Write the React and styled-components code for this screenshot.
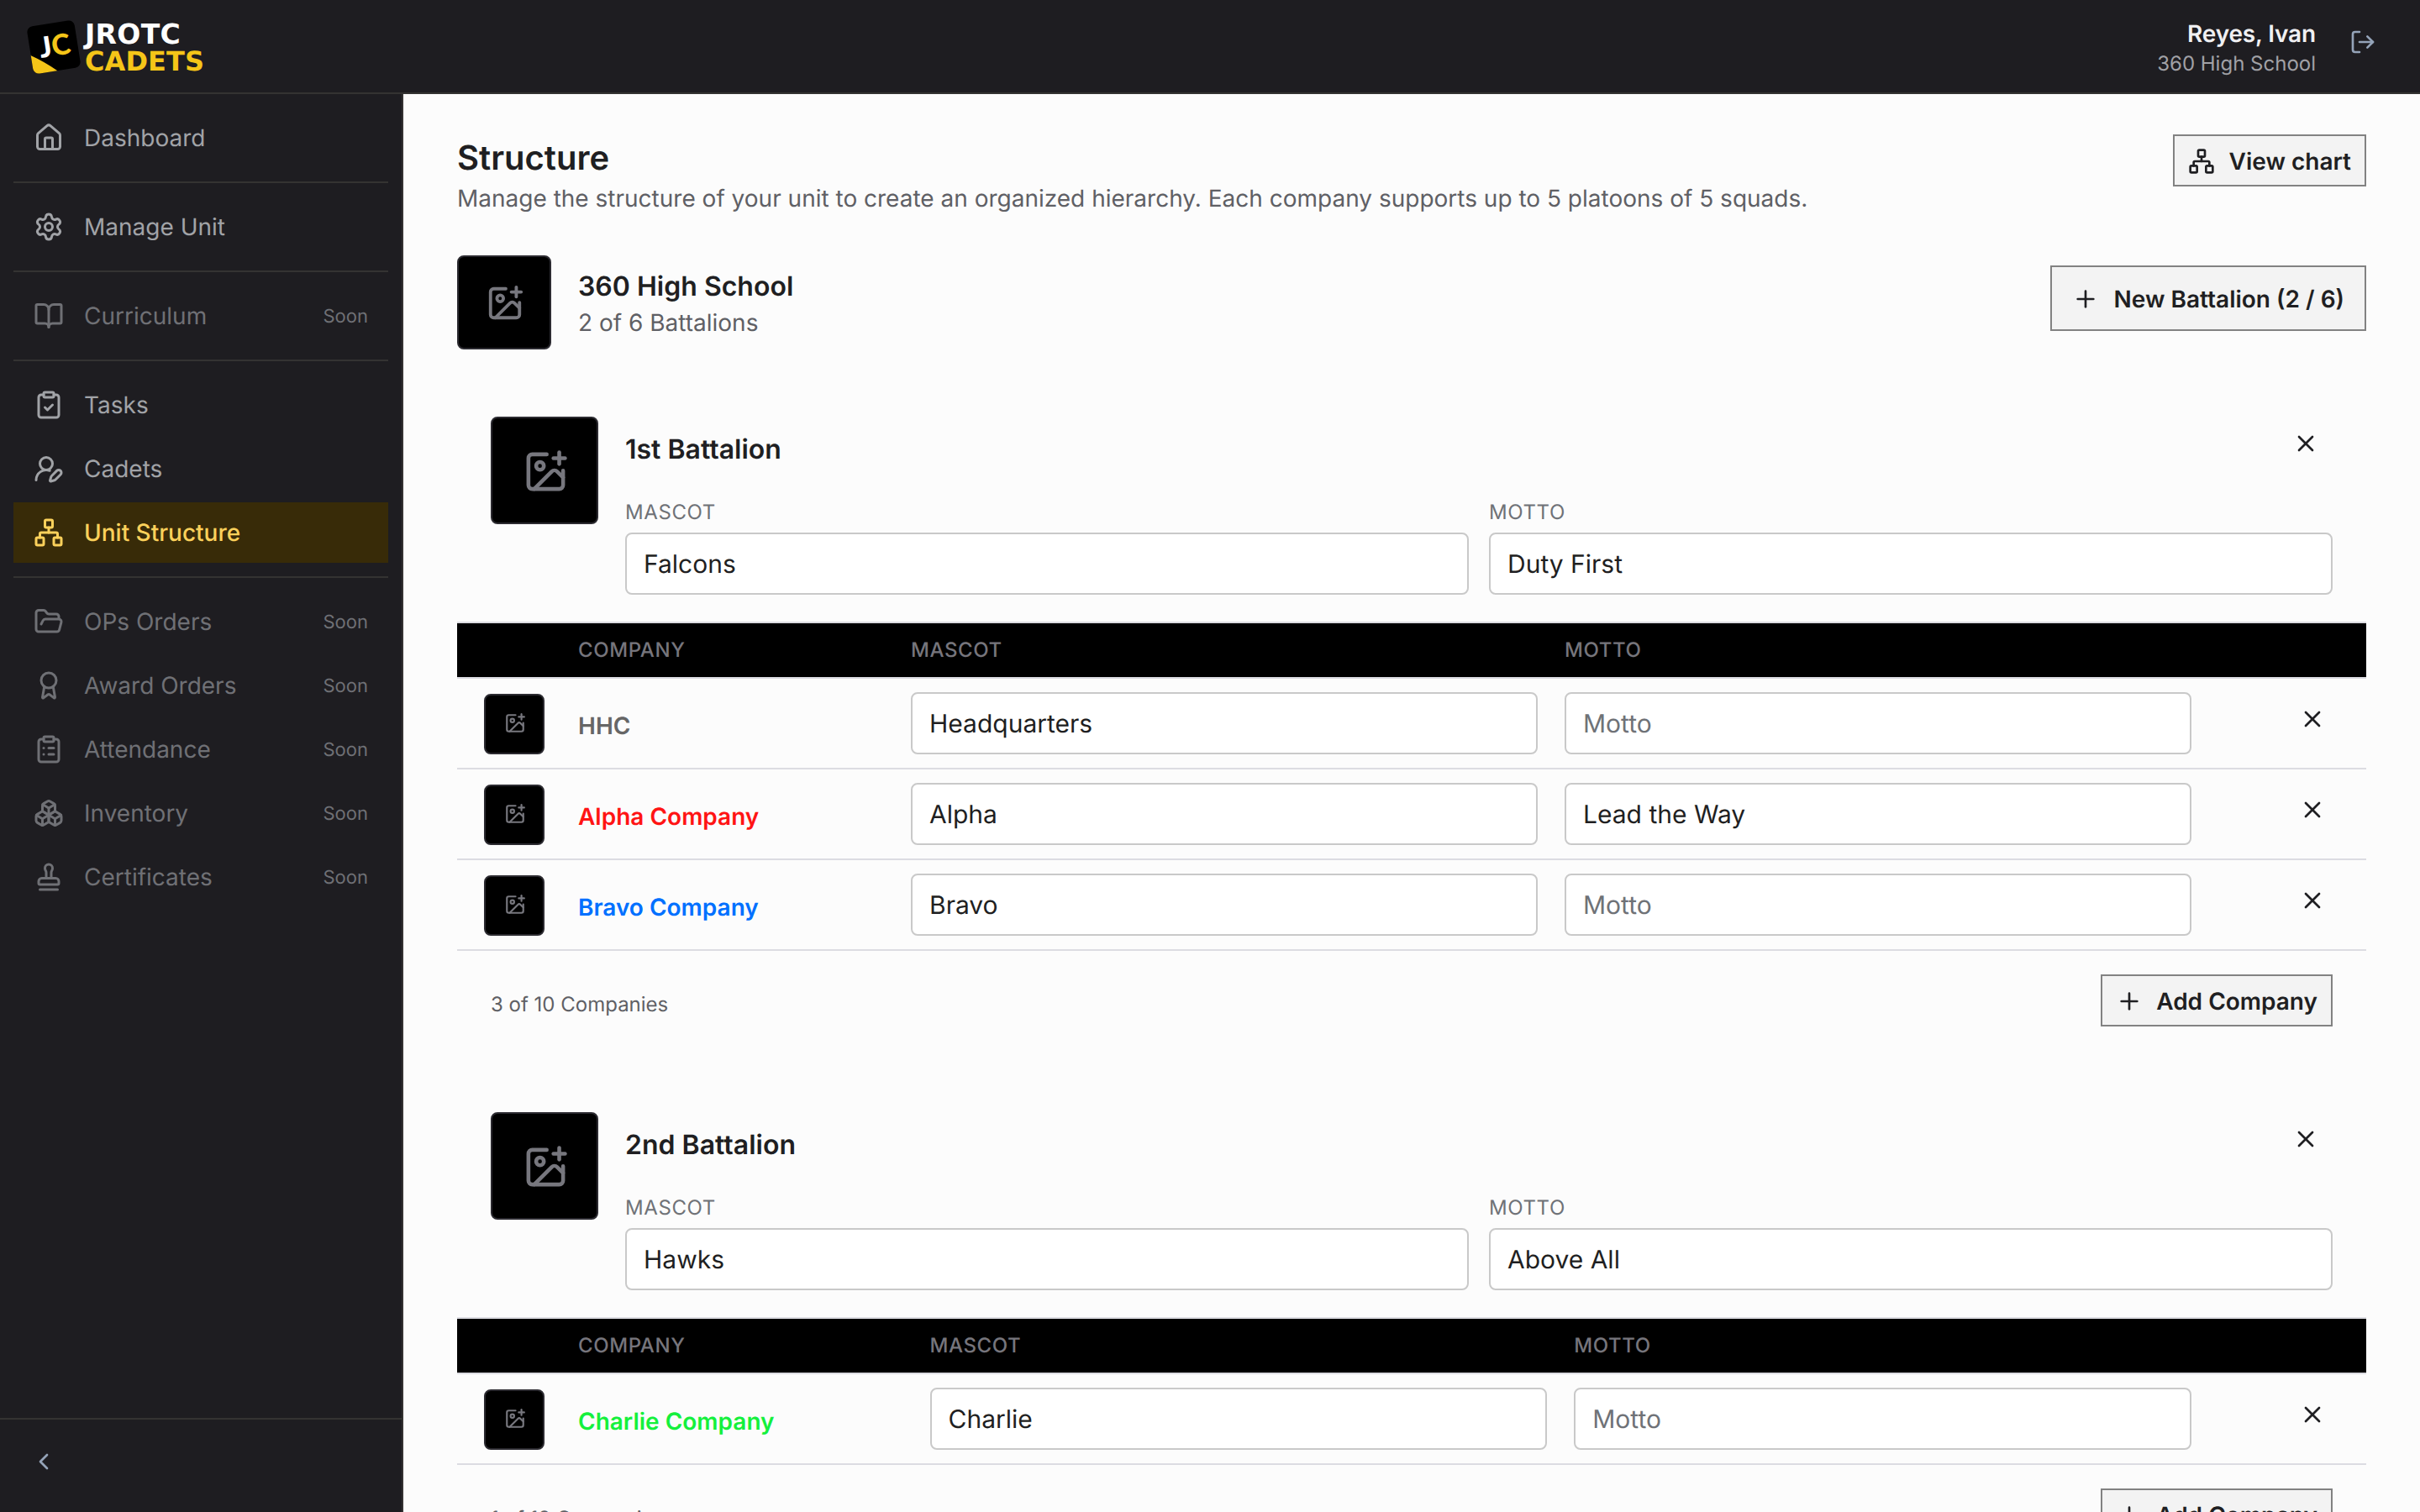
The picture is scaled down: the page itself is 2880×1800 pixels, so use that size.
import styled, { createGlobalStyle } from 'styled-components';
import {
  Award,
  BookOpen,
  Boxes,
  ChevronLeft,
  ClipboardCheck,
  ClipboardList,
  FolderOpen,
  House,
  ImagePlus,
  LogOut,
  Network,
  Plus,
  Settings,
  Stamp,
  UserRoundPen,
  X,
} from 'lucide-react';

const GlobalStyle = createGlobalStyle`
  * {
    box-sizing: border-box;
  }

  body {
    margin: 0;
    background: #fcfcfc;
    color: #1f1f22;
    font-family: Inter, 'Liberation Sans', sans-serif;
    font-size: 28px;
    text-rendering: geometricPrecision;
    overflow: hidden;
  }

  h1, h2, h3, p {
    margin: 0;
  }

  button, input {
    font-family: inherit;
    text-rendering: inherit;
  }

  svg {
    flex-shrink: 0;
  }
`;

const Shell = styled.div`
  display: flex;
  flex-direction: column;
  height: 100vh;
  overflow: hidden;
`;

const TopBar = styled.header`
  display: flex;
  flex-shrink: 0;
  align-items: center;
  justify-content: space-between;
  height: 112px;
  padding: 0 52px 0 32px;
  background: #1e1d21;
  border-bottom: 2px solid #343332;
`;

const Brand = styled.div`
  display: flex;
  align-items: center;
  padding-top: 2px;
`;

const BrandName = styled.div`
  display: flex;
  flex-direction: column;
  margin-left: 5px;
  padding-top: 2px;
  color: #fff;
  font: bold 33px/32px 'DejaVu Sans', sans-serif;
  letter-spacing: 0.3px;

  span {
    color: #f5c518;
    font-size: 32px;
    letter-spacing: 0.1px;
  }
`;

const Account = styled.div`
  display: flex;
  align-items: center;
  gap: 40px;
  color: #94a3b8;

  svg {
    margin-bottom: 10px;
  }
`;

const AccountText = styled.div`
  display: flex;
  flex-direction: column;
  align-items: flex-end;
  padding-top: 2px;
  color: #a1a1a6;
  font-size: 24px;
  line-height: 32px;

  strong {
    color: #f0f0f2;
    font-size: 28px;
    font-weight: 600;
    line-height: 40px;
    letter-spacing: -0.15px;
  }
`;

const Body = styled.div`
  display: flex;
  flex: 1;
  min-height: 0;
`;

const Sidebar = styled.aside`
  display: flex;
  flex-direction: column;
  flex-shrink: 0;
  width: 480px;
  background: #1e1d21;
  border-right: 2px solid #343332;
`;

const NavGroup = styled.nav`
  display: flex;
  flex-direction: column;
  gap: 4px;
  margin: 0 16px;
  padding: 16px 0;

  & + & {
    border-top: 2px solid #343332;
  }
`;

const NavItem = styled.a`
  display: flex;
  align-items: center;
  gap: 24px;
  height: 72px;
  padding: 0 24px;
  color: ${({ $active, $soon }) => ($active ? '#fbd15b' : $soon ? '#6f7075' : '#a1a3a7')};
  background: ${({ $active }) => ($active ? '#382b08' : 'transparent')};
  font-weight: ${({ $active }) => ($active ? 500 : 400)};
`;

const Soon = styled.span`
  margin-left: auto;
  padding-top: 2px;
  font-size: 22px;
`;

const SidebarFooter = styled.div`
  height: 112px;
  margin-top: auto;
  padding: 34px 36px;
  color: #94a3b8;
  border-top: 2px solid #343332;
`;

const Main = styled.main`
  flex: 1;
  min-width: 0;
  padding: 48px 64px 0;
  overflow: hidden;
`;

const PageHeader = styled.div`
  display: flex;
  align-items: flex-start;
  justify-content: space-between;
  height: 144px;
`;

const Title = styled.h1`
  font-size: 40px;
  font-weight: 600;
  line-height: 56px;
`;

const Muted = styled.p`
  color: #5f6065;
  line-height: 40px;
`;

const Button = styled.button`
  display: flex;
  align-items: center;
  justify-content: space-between;
  width: ${({ $width }) => $width}px;
  height: ${({ $large }) => ($large ? 78 : 62)}px;
  padding: 2px ${({ $large }) => ($large ? 24 : 16)}px 0;
  color: #1f1f22;
  background: #f3f3f3;
  border: 2px solid #828282;
  border-radius: 0;
  font-size: 28px;
  font-weight: 600;
  white-space: nowrap;
`;

const UnitRow = styled.section`
  display: flex;
  align-items: center;
  height: 112px;

  ${Button} {
    margin: 0 0 10px auto;
  }
`;

const Avatar = styled.div`
  display: flex;
  flex-shrink: 0;
  align-items: center;
  justify-content: center;
  width: ${({ $size }) => $size}px;
  height: ${({ $size }) => $size}px;
  padding: 2px 0 0 2px;
  color: #77777e;
  background: #000;
  border: 2px solid #2b2a30;
  border-radius: 8px;
`;

const Heading = styled.h2`
  font-size: 32px;
  font-weight: 600;
  line-height: 50px;
`;

const UnitText = styled.div`
  margin-left: 32px;

  ${Muted} {
    margin-top: -2px;
  }
`;

const Battalion = styled.section`
  height: 828px;
  padding-top: 80px;
`;

const BattalionTop = styled.div`
  display: flex;
  gap: 32px;
  height: 244px;
  padding: 0 40px;
`;

const BattalionInfo = styled.div`
  flex: 1;
`;

const BattalionTitle = styled.div`
  display: flex;
  align-items: flex-start;
  justify-content: space-between;
  height: 98px;
  padding: 16px 16px 0 0;

  ${Heading} {
    margin-top: -2px;
  }
`;

const Fields = styled.div`
  display: grid;
  grid-template-columns: 1fr 1fr;
  gap: 24px;
`;

const Field = styled.label`
  display: flex;
  flex-direction: column;
  gap: 8px;
  color: #6f7277;
  font-size: 24px;
  line-height: 32px;
  letter-spacing: 0.6px;
`;

const Input = styled.input`
  width: 100%;
  height: 74px;
  padding: 2px 20px 0;
  color: #1f1f22;
  background: #fff;
  border: 2px solid #c9c9c9;
  border-radius: 8px;
  font-size: 30px;

  &::placeholder {
    color: #6f7277;
    opacity: 1;
  }
`;

const Row = styled.div`
  display: grid;
  grid-template-columns: 112px ${({ $nameWidth }) => $nameWidth}px 1fr 1fr 144px;
  column-gap: 32px;
  align-items: center;
  height: 108px;
  padding-right: 32px;
  border-bottom: 2px solid #dcdce2;

  ${Avatar} {
    margin: 2px 0 0 32px;
    padding: 0 0 2px 2px;
  }

  & > svg {
    justify-self: end;
    margin: 0 16px 10px 0;
  }
`;

const HeaderRow = styled(Row)`
  height: 68px;
  padding-bottom: 2px;
  color: #76757c;
  background: #000;
  border-top: 2px solid #dcdce2;
  font-size: 24px;
  font-weight: 500;
  letter-spacing: 0.6px;
`;

const CompanyName = styled.span`
  padding-top: 6px;
  color: ${({ $color }) => $color};
  font-weight: 600;
`;

const BattalionFooter = styled.div`
  display: flex;
  align-items: flex-start;
  justify-content: space-between;
  padding: 28px 40px 0;

  ${Muted} {
    padding-top: 16px;
    font-size: 24px;
  }
`;

const navGroups = [
  [{ label: 'Dashboard', icon: House }],
  [{ label: 'Manage Unit', icon: Settings }],
  [{ label: 'Curriculum', icon: BookOpen, soon: true }],
  [
    { label: 'Tasks', icon: ClipboardCheck },
    { label: 'Cadets', icon: UserRoundPen },
    { label: 'Unit Structure', icon: Network, active: true },
  ],
  [
    { label: 'OPs Orders', icon: FolderOpen, soon: true },
    { label: 'Award Orders', icon: Award, soon: true },
    { label: 'Attendance', icon: ClipboardList, soon: true },
    { label: 'Inventory', icon: Boxes, soon: true },
    { label: 'Certificates', icon: Stamp, soon: true },
  ],
];

const battalions = [
  {
    name: '1st Battalion',
    mascot: 'Falcons',
    motto: 'Duty First',
    nameWidth: 364,
    companies: [
      { name: 'HHC', color: '#666', mascot: 'Headquarters', motto: '' },
      { name: 'Alpha Company', color: '#ff1414', mascot: 'Alpha', motto: 'Lead the Way' },
      { name: 'Bravo Company', color: '#0070ff', mascot: 'Bravo', motto: '' },
    ],
  },
  {
    name: '2nd Battalion',
    mascot: 'Hawks',
    motto: 'Above All',
    nameWidth: 386.5,
    companies: [{ name: 'Charlie Company', color: '#14f03c', mascot: 'Charlie', motto: '' }],
  },
];

function LogoMark() {
  return (
    <svg width='64' height='64' viewBox='0 0 64 64'>
      <defs>
        <clipPath id='tile'>
          <rect x='3.5' y='3.5' width='57' height='57' rx='7' transform='rotate(-9 32 32)' />
        </clipPath>
      </defs>
      <g clipPath='url(#tile)'>
        <rect width='64' height='64' fill='#000' />
        <path d='M0 39.4 L5.5 42.5 Q20 49 35.3 59.5 L44 66 H0 Z' fill='#f5c518' />
      </g>
      <text
        x='33.5'
        y='42.5'
        transform='rotate(-9 32 32)'
        textAnchor='middle'
        fill='#fff'
        fontFamily='Lato, sans-serif'
        fontWeight='900'
        fontSize='34'
      >
        J<tspan fill='#f5c518'>C</tspan>
      </text>
    </svg>
  );
}

function BattalionCard({ name, mascot, motto, nameWidth, companies }) {
  return (
    <Battalion>
      <BattalionTop>
        <Avatar $size={128}><ImagePlus size={55} /></Avatar>
        <BattalionInfo>
          <BattalionTitle>
            <Heading>{name}</Heading>
            <X size={32} />
          </BattalionTitle>
          <Fields>
            <Field>MASCOT<Input defaultValue={mascot} /></Field>
            <Field>MOTTO<Input defaultValue={motto} /></Field>
          </Fields>
        </BattalionInfo>
      </BattalionTop>
      <HeaderRow $nameWidth={nameWidth}>
        <span />
        <span>COMPANY</span>
        <span>MASCOT</span>
        <span>MOTTO</span>
      </HeaderRow>
      {companies.map((company) => (
        <Row key={company.name} $nameWidth={nameWidth}>
          <Avatar $size={72}><ImagePlus size={26} /></Avatar>
          <CompanyName $color={company.color}>{company.name}</CompanyName>
          <Input placeholder='Mascot' defaultValue={company.mascot} />
          <Input placeholder='Motto' defaultValue={company.motto} />
          <X size={32} />
        </Row>
      ))}
      <BattalionFooter>
        <Muted>{companies.length} of 10 Companies</Muted>
        <Button $width={276}><Plus size={32} />Add Company</Button>
      </BattalionFooter>
    </Battalion>
  );
}

function App() {
  return (
    <Shell>
      <GlobalStyle />
      <TopBar>
        <Brand>
          <LogoMark />
          <BrandName>JROTC<span>CADETS</span></BrandName>
        </Brand>
        <Account>
          <AccountText>
            <strong>Reyes, Ivan</strong>
            360 High School
          </AccountText>
          <LogOut size={32} />
        </Account>
      </TopBar>
      <Body>
        <Sidebar>
          {navGroups.map((group) => (
            <NavGroup key={group[0].label}>
              {group.map(({ label, icon: Icon, soon, active }) => (
                <NavItem key={label} $soon={soon} $active={active}>
                  <Icon size={36} />
                  {label}
                  {soon ? <Soon>Soon</Soon> : null}
                </NavItem>
              ))}
            </NavGroup>
          ))}
          <SidebarFooter>
            <ChevronLeft size={32} />
          </SidebarFooter>
        </Sidebar>
        <Main>
          <PageHeader>
            <div>
              <Title>Structure</Title>
              <Muted>
                Manage the structure of your unit to create an organized hierarchy. Each company supports up to 5 platoons of 5 squads.
              </Muted>
            </div>
            <Button $width={230}><Network size={32} />View chart</Button>
          </PageHeader>
          <UnitRow>
            <Avatar $size={112}><ImagePlus size={46} /></Avatar>
            <UnitText>
              <Heading>360 High School</Heading>
              <Muted>2 of 6 Battalions</Muted>
            </UnitText>
            <Button $large $width={376}><Plus size={32} />New Battalion (2 / 6)</Button>
          </UnitRow>
          {battalions.map((battalion) => (
            <BattalionCard key={battalion.name} {...battalion} />
          ))}
        </Main>
      </Body>
    </Shell>
  );
}

export default App;
